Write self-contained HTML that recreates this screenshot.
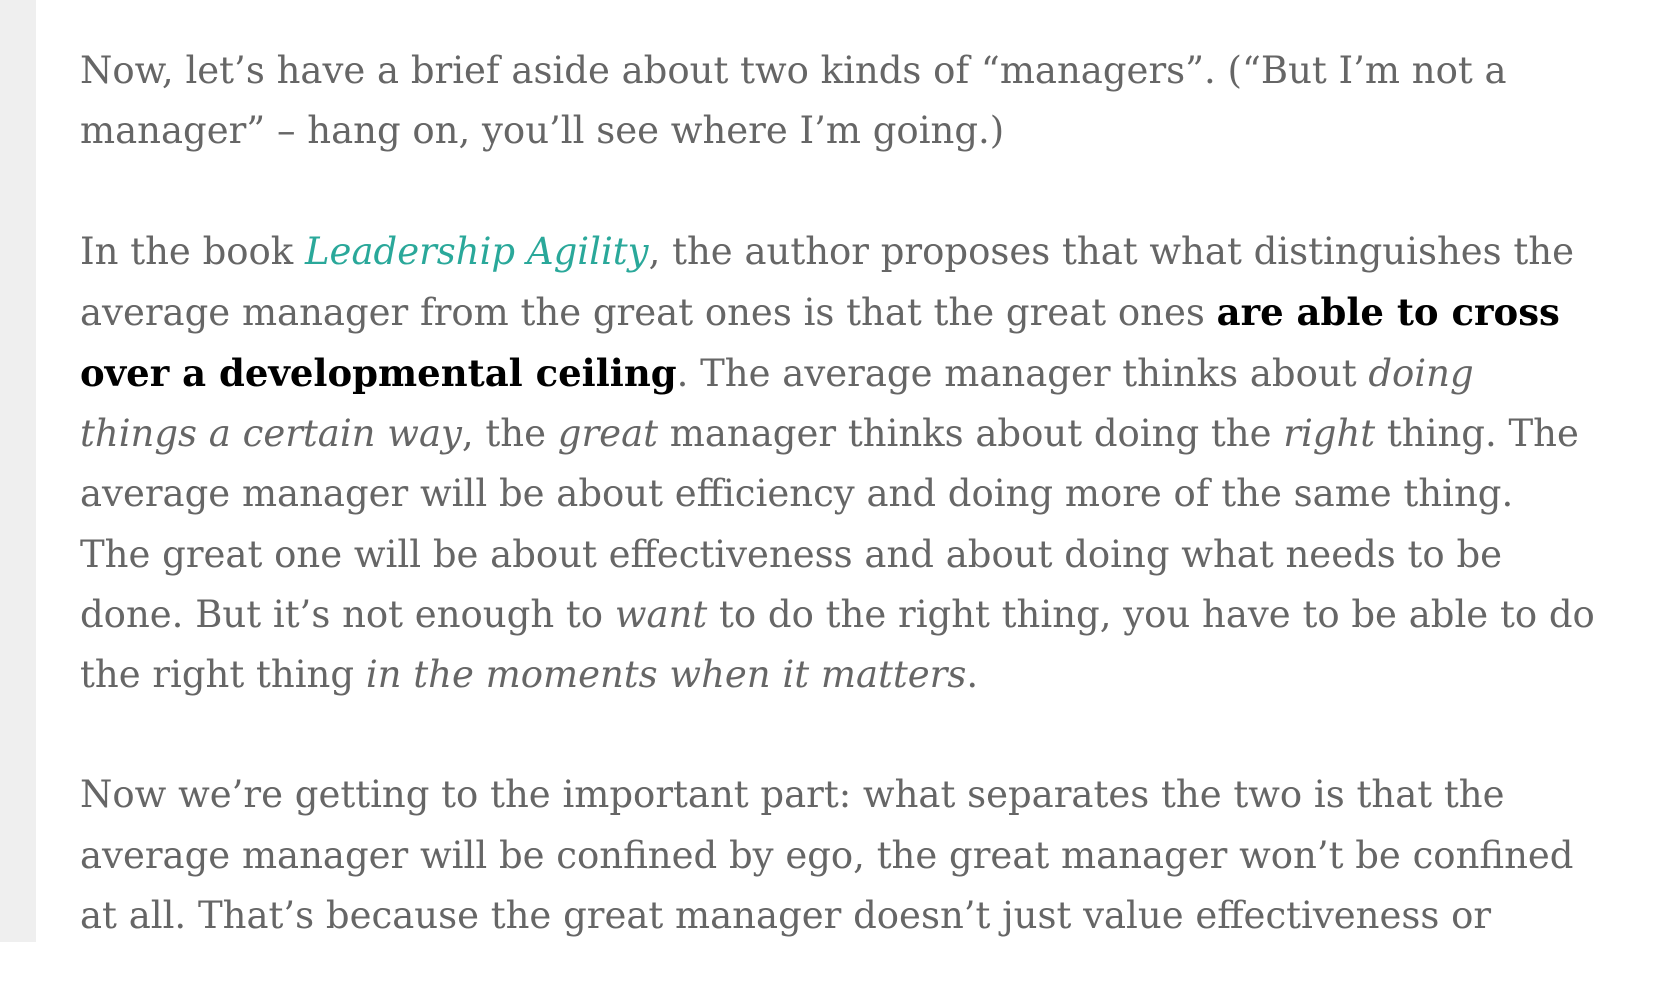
<html><head><style>
body{margin:0;background:#fff;width:1676px;height:942px;overflow:hidden;position:relative}
.side{position:absolute;left:0;top:0;width:36px;height:942px;background:#efefef}
.t{position:absolute;left:80px;top:41px;font-family:"DejaVu Serif","Liberation Serif",serif;font-size:37px;line-height:60.2px;color:#666;white-space:nowrap}
p{margin:0 0 60.2px 0}
a{color:#2aa89a;font-style:italic;text-decoration:none}
b{color:#000}
</style></head><body><div class="side"></div>
<div class="t">
<p>Now, let’s have a brief aside about two kinds of “managers”. (“But I’m not a<br>manager” – hang on, you’ll see where I’m going.)</p>
<p>In the book <a>Leadership Agility</a>, the author proposes that what distinguishes the<br>average manager from the great ones is that the great ones <b>are able to cross</b><br><b>over a developmental ceiling</b>. The average manager thinks about <i>doing</i><br><i>things a certain way</i>, the <i>great</i> manager thinks about doing the <i>right</i> thing. The<br>average manager will be about efficiency and doing more of the same thing.<br>The great one will be about effectiveness and about doing what needs to be<br>done. But it’s not enough to <i>want</i> to do the right thing, you have to be able to do<br>the right thing <i>in the moments when it matters</i>.</p>
<p>Now we’re getting to the important part: what separates the two is that the<br>average manager will be confined by ego, the great manager won’t be confined<br>at all. That’s because the great manager doesn’t just value effectiveness or</p>
</div></body></html>
